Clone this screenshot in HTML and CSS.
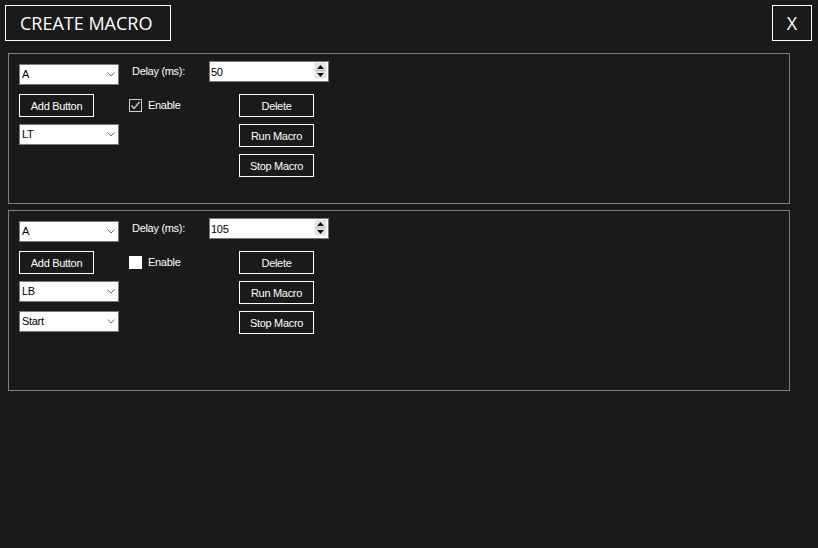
FILE: index.html
```html
<!DOCTYPE html>
<html lang="en">
<head>
<meta charset="utf-8">
<title>Create Macro</title>
<link rel="stylesheet" href="styles.css">
</head>
<body>
<div class="window">
  <header class="topbar">
    <div class="title">CREATE MACRO</div>
    <div class="close">X</div>
  </header>

  <section class="panel panel-short">
    <div class="col keys">
      <div class="combo"><span>A</span><svg class="chev" width="8" height="5" viewBox="0 0 8 5"><polyline points="0.5,0.5 4,4 7.5,0.5" fill="none" stroke="#6a6a6a" stroke-width="1"/></svg></div>
      <div class="btn">Add Button</div>
      <div class="combo"><span>LT</span><svg class="chev" width="8" height="5" viewBox="0 0 8 5"><polyline points="0.5,0.5 4,4 7.5,0.5" fill="none" stroke="#6a6a6a" stroke-width="1"/></svg></div>
    </div>
    <div class="col opts">
      <div class="label">Delay (ms):</div>
      <div class="checkrow">
        <span class="check checked"><svg width="11" height="11" viewBox="0 0 11 11"><polyline points="1.5,5.5 4,8.5 9.5,2" fill="none" stroke="#cfcfcf" stroke-width="1.3"/></svg></span>
        <span class="check-label">Enable</span>
      </div>
    </div>
    <div class="col actions">
      <div class="numeric"><span>50</span>
        <div class="spin">
          <div class="spin-half"><svg width="7" height="4" viewBox="0 0 7 4"><polygon points="3.5,0 7,4 0,4" fill="#111"/></svg></div>
          <div class="spin-half"><svg width="7" height="4" viewBox="0 0 7 4"><polygon points="0,0 7,0 3.5,4" fill="#111"/></svg></div>
        </div>
      </div>
      <div class="btn-stack">
        <div class="btn">Delete</div>
        <div class="btn">Run Macro</div>
        <div class="btn">Stop Macro</div>
      </div>
    </div>
  </section>

  <section class="panel panel-tall">
    <div class="col keys">
      <div class="combo"><span>A</span><svg class="chev" width="8" height="5" viewBox="0 0 8 5"><polyline points="0.5,0.5 4,4 7.5,0.5" fill="none" stroke="#6a6a6a" stroke-width="1"/></svg></div>
      <div class="btn">Add Button</div>
      <div class="combo"><span>LB</span><svg class="chev" width="8" height="5" viewBox="0 0 8 5"><polyline points="0.5,0.5 4,4 7.5,0.5" fill="none" stroke="#6a6a6a" stroke-width="1"/></svg></div>
      <div class="combo"><span>Start</span><svg class="chev" width="8" height="5" viewBox="0 0 8 5"><polyline points="0.5,0.5 4,4 7.5,0.5" fill="none" stroke="#6a6a6a" stroke-width="1"/></svg></div>
    </div>
    <div class="col opts">
      <div class="label">Delay (ms):</div>
      <div class="checkrow">
        <span class="check"></span>
        <span class="check-label">Enable</span>
      </div>
    </div>
    <div class="col actions">
      <div class="numeric"><span>105</span>
        <div class="spin">
          <div class="spin-half"><svg width="7" height="4" viewBox="0 0 7 4"><polygon points="3.5,0 7,4 0,4" fill="#111"/></svg></div>
          <div class="spin-half"><svg width="7" height="4" viewBox="0 0 7 4"><polygon points="0,0 7,0 3.5,4" fill="#111"/></svg></div>
        </div>
      </div>
      <div class="btn-stack">
        <div class="btn">Delete</div>
        <div class="btn">Run Macro</div>
        <div class="btn">Stop Macro</div>
      </div>
    </div>
  </section>
</div>
</body>
</html>
```

FILE: styles.css
```css
* { box-sizing: border-box; }

html, body {
  margin: 0;
  padding: 0;
  background: #1a1a1a;
}

body {
  width: 818px;
  height: 548px;
  overflow: hidden;
  font-family: "Liberation Sans", Arial, sans-serif;
  font-size: 11px;
  letter-spacing: -0.3px;
  color: #ffffff;
}

.window {
  display: flex;
  flex-direction: column;
}

.topbar {
  display: flex;
  justify-content: space-between;
  padding: 5px 6px 0 5px;
}

.title, .close {
  font-family: "Open Sans", "Liberation Sans", sans-serif;
  font-size: 18px;
  letter-spacing: 0;
  border: 1px solid #ffffff;
  height: 36px;
  display: flex;
  align-items: center;
}

.title {
  width: 166px;
  padding-left: 14px;
}

.close {
  width: 40px;
  justify-content: center;
}

.panel {
  display: flex;
  margin-left: 8px;
  width: 782px;
  border: 1px solid #808080;
  padding: 7px 10px 0 10px;
}

.panel-short {
  margin-top: 12px;
  height: 151px;
}

.panel-tall {
  margin-top: 6px;
  height: 181px;
}

.col {
  display: flex;
  flex-direction: column;
}

.keys {
  width: 100px;
  margin-top: 3px;
  margin-right: 10px;
}

.keys .combo + .combo {
  margin-top: 9px;
}

.keys .btn {
  margin: 9px 0 7px;
}

.combo {
  width: 100px;
  height: 21px;
  border: 1px solid #7a7a7a;
  background: #ffffff;
  color: #000000;
  display: flex;
  align-items: center;
  justify-content: space-between;
  padding: 0 3px 1px 2px;
}

.chev {
  display: block;
  margin-top: 1px;
}

.btn {
  width: 75px;
  height: 23px;
  border: 1px solid #ffffff;
  display: flex;
  align-items: center;
  justify-content: center;
  color: #ffffff;
}

.opts {
  width: 80px;
  margin-top: 4px;
}

.label {
  line-height: 13px;
  padding-left: 3px;
}

.checkrow {
  display: flex;
  align-items: center;
  margin-top: 21px;
  height: 13px;
}

.check {
  width: 13px;
  height: 13px;
  background: #ffffff;
  border: 1px solid #ffffff;
  display: flex;
  align-items: center;
  justify-content: center;
}

.check.checked {
  background: #1a1a1a;
  border-color: #cfcfcf;
}

.check svg {
  display: block;
}

.check-label {
  margin-left: 6px;
  line-height: 13px;
}

.actions {
  width: 120px;
}

.numeric {
  position: relative;
  width: 120px;
  height: 21px;
  border: 1px solid #7a7a7a;
  background: #ffffff;
  color: #000000;
  display: flex;
  align-items: center;
  padding-left: 1px;
}

.spin {
  position: absolute;
  right: 1px;
  top: 0;
  width: 13px;
  height: 17px;
  display: flex;
  flex-direction: column;
  background: #e3e3e3;
  border: 1px solid #f4f4f4;
}

.spin-half {
  flex: 1;
  display: flex;
  align-items: center;
  justify-content: center;
}

.spin-half + .spin-half {
  border-top: 1px solid #bdbdbd;
}

.spin-half svg {
  display: block;
}

.btn-stack {
  display: flex;
  flex-direction: column;
  gap: 7px;
  margin-top: 12px;
  margin-left: 30px;
}
```
